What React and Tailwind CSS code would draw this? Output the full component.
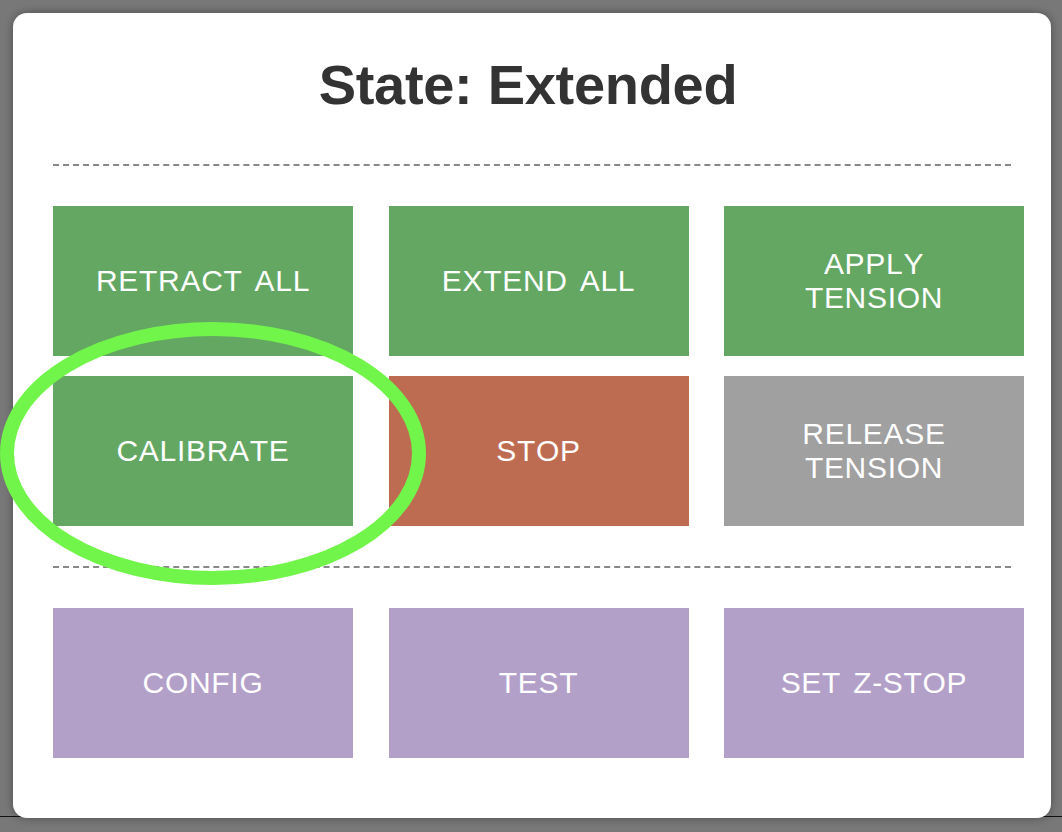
import React from 'react'

const rows = [
  [
    { label: 'RETRACT ALL', color: 'bg-[#63a763]' },
    { label: 'EXTEND ALL', color: 'bg-[#63a763]' },
    { label: 'APPLY TENSION', color: 'bg-[#63a763]' },
  ],
  [
    { label: 'CALIBRATE', color: 'bg-[#63a763]' },
    { label: 'STOP', color: 'bg-[#bd6c52]' },
    { label: 'RELEASE TENSION', color: 'bg-[#a0a0a0]' },
  ],
]

const tools = [
  { label: 'CONFIG', color: 'bg-[#b3a0c9]' },
  { label: 'TEST', color: 'bg-[#b3a0c9]' },
  { label: 'SET Z-STOP', color: 'bg-[#b3a0c9]' },
]

function Btn({ label, color }) {
  return (
    <button className={`${color} h-[150px] w-[300px] px-[32px] flex items-center justify-center text-center text-white text-[30px] leading-[34.5px] tracking-[0.7px] [word-spacing:3px] [font-kerning:none]`}>
      {label}
    </button>
  )
}

export default function App() {
  return (
    <div
      className="relative w-[1062px] h-[832px] overflow-hidden bg-[#787878] bg-[linear-gradient(to_bottom,transparent_816px,#111_816px,#111_817px,transparent_817px)] pt-[13px] pl-[13px]"
      style={{ fontFamily: '"Liberation Sans", Arial, sans-serif' }}
    >
      <div className="w-[1038px] h-[805px] bg-white rounded-[14px] shadow-[0_0_10px_rgba(0,0,0,0.35)] pt-[40px] px-[40px]">
        <h1 className="text-center text-[56px] font-bold text-[#333] leading-[64px] pr-[8px] tracking-[-0.3px]">State: Extended</h1>

        <div className="mt-[47px] border-t-2 border-dashed border-[#888]" />

        <div className="mt-[40px] grid grid-cols-[300px_300px_300px] gap-x-[35.5px] gap-y-[20px] w-[972px]">
          {rows.flat().map((b) => (
            <Btn key={b.label} {...b} />
          ))}
        </div>

        <div className="mt-[40px] border-t-2 border-dashed border-[#888]" />

        <div className="mt-[40px] grid grid-cols-[300px_300px_300px] gap-x-[35.5px] w-[972px]">
          {tools.map((b) => (
            <Btn key={b.label} {...b} />
          ))}
        </div>
      </div>

      {/* annotation circle */}
      <svg className="absolute left-0 top-0 pointer-events-none" width="1062" height="832">
        <ellipse cx="213" cy="453.5" rx="206" ry="124.5" fill="none" stroke="#72f54a" strokeWidth="14" />
      </svg>
    </div>
  )
}
